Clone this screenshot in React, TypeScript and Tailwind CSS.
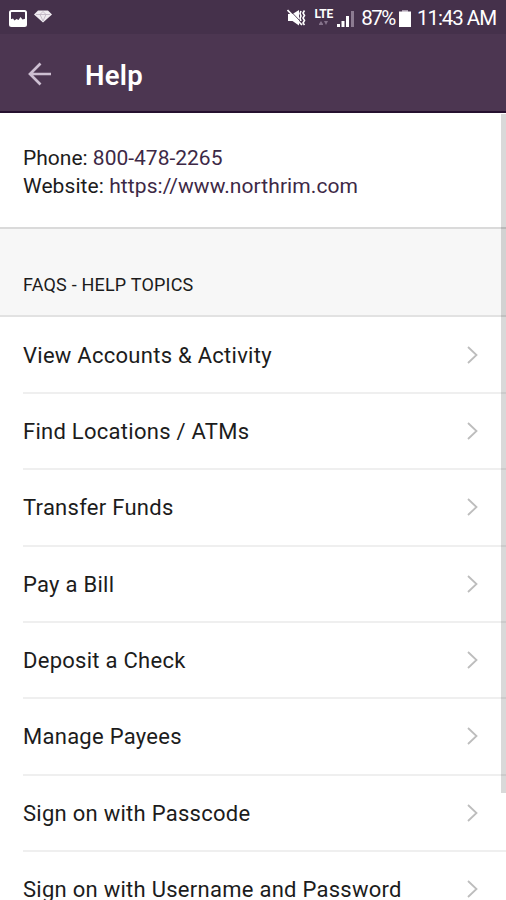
const topics = [
  "View Accounts & Activity",
  "Find Locations / ATMs",
  "Transfer Funds",
  "Pay a Bill",
  "Deposit a Check",
  "Manage Payees",
  "Sign on with Passcode",
  "Sign on with Username and Password",
];

function StatusBar() {
  return (
    <div className="flex h-[34px] shrink-0 items-center bg-[#45314b] pl-[9px] pr-[10px] pt-[2px] text-white">
      <svg width="18" height="17" viewBox="0 0 18 17">
        <rect x="1" y="1" width="16" height="15" rx="1.5" fill="none" stroke="white" strokeWidth="2" />
        <path d="M1 15.500V9.500l3-1 1.500 2 2-1.500 2 1 2-3 2 2.500 3.500-1v7z" fill="white" />
      </svg>
      <svg className="ml-[7px] mb-[3px]" width="18" height="13" viewBox="0 0 18 13">
        <path d="M4 0.500h10L18 4.500 9 12.500 0 4.500z" fill="#f0ecf1" />
        <path d="M2 4.500h14M6 4.500L9 11l3-6.500L9 1.500 6 4.500" fill="none" stroke="#b5a9b9" strokeWidth="0.7" />
      </svg>
      <svg className="ml-auto" width="19" height="18" viewBox="0 0 19 18">
        <path d="M1 5h4.500L12 1v15.500L5.500 12H1z" fill="white" />
        <path d="M2.500 1L14 13" stroke="#45314b" strokeWidth="0.9" />
        <path d="M0.500 1L15 16" stroke="white" strokeWidth="1.700" />
        <path d="M14 2l-1 2.500L14 7l-1 2.500 1 2.500M17.500 1.500L16 4l1.500 2.500L16 9l1.500 2.500L16 14l1.500 2" fill="none" stroke="white" strokeWidth="1.600" />
      </svg>
      <div className="ml-[8px] mb-[2px] flex h-[19px] w-[19px] flex-col items-center">
        <span className="text-[12px] font-bold leading-[13px] tracking-[-0.3px]">LTE</span>
        <svg width="9" height="4" viewBox="0 0 9 4" fill="#85738b">
          <path d="M0 3l2-3 2 3v1H0zM5 0h4L7 4z" />
        </svg>
      </div>
      <svg className="ml-[4px]" width="18" height="17" viewBox="0 0 18 17" fill="white">
        <path d="M0 17v-3h3v3zM4.500 17v-6h3v6zM9 17V6h3v11z" />
        <path d="M14 17V1h3v16z" fill="#8c7b91" />
      </svg>
      <span className="ml-[6px] text-[20.500px] leading-none tracking-[-1.4px]">87%</span>
      <svg className="ml-[4px]" width="12" height="17" viewBox="0 0 12 17" fill="white">
        <path d="M3 0h6v2H3z" fill="#a99bad" />
        <path d="M0 1.500h12V17H0z" />
      </svg>
      <span className="ml-[6px] text-[20.500px] leading-none tracking-[-1.05px]">11:43 AM</span>
    </div>
  );
}

export default function App() {
  return (
    <main className="relative flex h-[900px] w-[506px] flex-col overflow-hidden bg-white font-['Roboto',sans-serif] text-[#1c1c1c]">
      <StatusBar />

      <header className="flex h-[79px] shrink-0 items-center border-b-2 border-[#26102f] bg-[#4c3651] pl-[28px] pt-[2px]">
        <svg width="25" height="24" viewBox="0 0 25 24" fill="none" stroke="#cdbfd2" strokeWidth="2.700">
          <path d="M12.500 1.500L2 12l10.500 10.500M2 12h21" />
        </svg>
        <h1 className="ml-[32px] pt-[4px] text-[27.500px] font-semibold leading-none tracking-[0.3px] text-white">Help</h1>
      </header>

      <section className="h-[116px] shrink-0 border-b-2 border-[#dadada] pl-[23px] pt-[31px] text-[21px] leading-[28.500px]">
        <p>
          Phone: <a className="text-[#3d2946]">800-478-2265</a>
        </p>
        <p className="-mt-px tracking-[0.08px]">
          Website: <a className="text-[#3d2946]">https://www.northrim.com</a>
        </p>
      </section>

      <h2 className="h-[88px] shrink-0 border-b-2 border-[#e2e2e2] bg-[#f7f7f7] pl-[23px] pt-[44px] text-[18px] leading-[24px] tracking-[0.2px]">
        FAQS - HELP TOPICS
      </h2>

      <ul className="shrink-0 pl-[23px] pt-[0.500px]">
        {topics.map((topic) => (
          <li key={topic} className="flex h-[76.350px] items-center justify-between border-b-2 border-[#efefef] pr-[28px]">
            <span className="pt-px text-[22px] tracking-[0.27px]">{topic}</span>
            <svg width="11" height="18" viewBox="0 0 11 18" fill="none" stroke="#bdbdbd" strokeWidth="1.800">
              <path d="M1 1l8.500 8L1 17" />
            </svg>
          </li>
        ))}
      </ul>

      {/* scroll thumb */}
      <div className="absolute right-0 top-[114px] h-[679px] w-[5px] bg-black/15" />
    </main>
  );
}
